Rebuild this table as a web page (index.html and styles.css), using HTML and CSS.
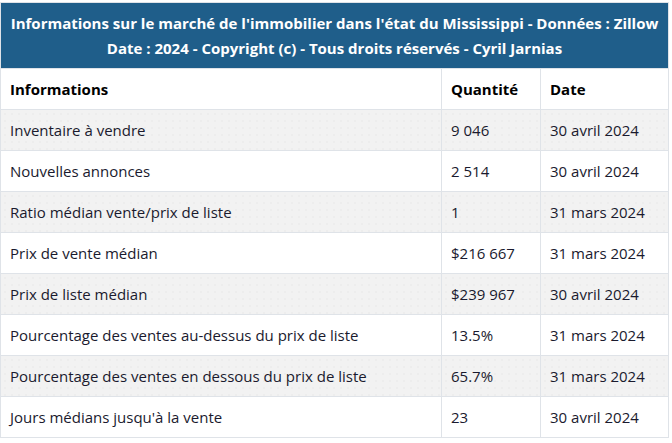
FILE: index.html
```html
<!DOCTYPE html>
<html lang="fr">
<head>
<meta charset="utf-8">
<link rel="stylesheet" href="styles.css">
</head>
<body>
<table class="data">
  <caption class="title">Informations sur le marché de l'immobilier dans l'état du Mississippi - Données : Zillow<br>Date : 2024 - Copyright (c) - Tous droits réservés - Cyril Jarnias</caption>
  <thead>
    <tr><th class="c1">Informations</th><th class="c2">Quantité</th><th class="c3">Date</th></tr>
  </thead>
  <tbody>
    <tr class="odd"><td>Inventaire à vendre</td><td>9 046</td><td>30 avril 2024</td></tr>
    <tr><td>Nouvelles annonces</td><td>2 514</td><td>30 avril 2024</td></tr>
    <tr class="odd"><td>Ratio médian vente/prix de liste</td><td>1</td><td>31 mars 2024</td></tr>
    <tr><td>Prix de vente médian</td><td>$216 667</td><td>31 mars 2024</td></tr>
    <tr class="odd"><td>Prix de liste médian</td><td>$239 967</td><td>30 avril 2024</td></tr>
    <tr><td>Pourcentage des ventes au-dessus du prix de liste</td><td>13.5%</td><td>31 mars 2024</td></tr>
    <tr class="odd"><td>Pourcentage des ventes en dessous du prix de liste</td><td>65.7%</td><td>31 mars 2024</td></tr>
    <tr><td>Jours médians jusqu'à la vente</td><td>23</td><td>30 avril 2024</td></tr>
  </tbody>
</table>
</body>
</html>
```
FILE: styles.css
```css
html, body {
  margin: 0;
  padding: 0;
  background: #ffffff;
}
body {
  font-family: "Open Sans", "Noto Sans", sans-serif;
  font-size: 15px;
  color: #000;
}
.data {
  border-collapse: collapse;
  width: 668px;
  margin-top: 2px;
  table-layout: fixed;
}
.title {
  background: #1f5e8a;
  color: #fff;
  font-weight: bold;
  font-size: 15px;
  line-height: 25px;
  padding: 8px 4px 7px;
  text-align: center;
  border: 1px solid #dfe3e8;
  border-bottom: none;
}
.c1 { width: 441px; }
.c2 { width: 99px; }
.c3 { width: 128px; }
th, td {
  border: 1px solid #dfe3e8;
  height: 41px;
  padding: 0 0 0 9px;
  text-align: left;
  box-sizing: border-box;
}
th {
  font-weight: bold;
  background: #fff;
}
td {
  color: #1a1a2e;
}
tr.odd td {
  background-color: #f2f2f2;
  background-image: radial-gradient(circle, #dcdcdc 0.6px, transparent 1px);
  background-size: 7px 7px;
}
```
